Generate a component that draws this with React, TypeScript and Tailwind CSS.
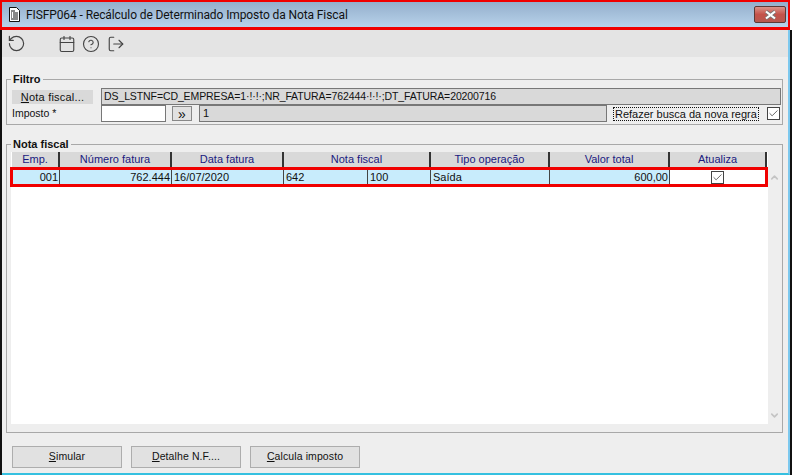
import { Calendar, Check, ChevronDown, ChevronUp, CircleHelp, LogOut, RotateCcw } from "lucide-react";

const columns = [
  { label: "Emp.", width: "w-[48px]" },
  { label: "Número fatura", width: "w-[112px]" },
  { label: "Data fatura", width: "w-[112px]" },
  { label: "Nota fiscal", width: "w-[147px]" },
  { label: "Tipo operação", width: "w-[119px]" },
  { label: "Valor total", width: "w-[120px]" },
  { label: "Atualiza", width: "w-[97px]" },
];

const CheckBox = () => (
  <span className="flex h-[13px] w-[13px] items-center justify-center border border-[#444] bg-white">
    <Check className="h-[11px] w-[11px] text-[#444]" strokeWidth={1.75} />
  </span>
);

const FormButton = ({ hot, rest }: { hot: string; rest: string }) => (
  <button className="flex h-[22px] w-[110px] items-center justify-center border border-[#adadad] bg-[#e1e1e1] text-[10.5px] tracking-[0.1px] text-[#111]">
    <span className="underline">{hot}</span>
    {rest}
  </button>
);

export default function App() {
  return (
    <div className="flex h-[475px] w-[792px] flex-col overflow-hidden bg-white font-['Liberation_Sans',Arial,sans-serif] text-[11px] text-[#111]">
      <header className="flex h-[30px] w-[790px] shrink-0 items-center border-x-2 border-t-2 border-b-[3px] border-[#f00000] bg-gradient-to-b from-[#94afcc] to-[#b8d2ea] pr-[2px] pl-[6px]">
        <svg className="h-[15px] w-[13px]" viewBox="0 0 13 15">
          <path d="M1.5 .5h7l3 3v11h-10z" fill="#fff" stroke="#111" />
          <path d="M3 4h4M3 6h1M5 6h5M3 8h1M5 8h5M3 10h1M5 10h5M3 12h7" stroke="#111" />
        </svg>
        <span className="ml-[5px] font-['Roboto',sans-serif] text-[12px] tracking-[-0.1px] text-[#111]">FISFP064 - Recálculo de Determinado Imposto da Nota Fiscal</span>
        <button className="ml-auto flex h-[17px] w-[32px] items-center justify-center rounded-[2px] border border-[#5c3a36] bg-gradient-to-b from-[#d9928a] via-[#c4524a] to-[#b8584e]">
          <svg className="h-[10px] w-[15px]" viewBox="0 0 15 10">
            <path d="M3 1.5l9 7M12 1.5l-9 7" stroke="#777" strokeWidth="3.6" />
            <path d="M3 1.5l9 7M12 1.5l-9 7" stroke="#fff" strokeWidth="2.2" />
          </svg>
        </button>
      </header>

      <div className="flex min-h-0 flex-1 flex-col border-x-2 border-x-[#111]">
        <div className="flex min-h-0 flex-1 flex-col border-r-2 border-b-2 border-r-[#7cc8ee] border-b-[#35c0e0] bg-[#eeeeee]">
          <div className="flex h-[27px] shrink-0 items-center bg-[#e4e4e4] pl-[5px] text-[#444]">
            <RotateCcw className="h-[19px] w-[19px]" strokeWidth={1.5} />
            <Calendar className="ml-[32px] h-[18px] w-[18px]" strokeWidth={1.5} />
            <CircleHelp className="ml-[6px] h-[18px] w-[18px]" strokeWidth={1.5} />
            <LogOut className="ml-[7px] h-[18px] w-[18px]" strokeWidth={1.5} />
          </div>

          <div className="flex flex-1 flex-col pr-[5px] pl-[4px]">
            <fieldset className="mt-[16px] h-[52px] border border-[#a8a8a8] pr-[1px] pl-[5px]">
              <legend className="-ml-[1px] px-[2px] text-[11px] leading-[13px] font-bold">Filtro</legend>
              <div className="mt-[2px] flex items-center">
                <button className="h-[14px] w-[81px] bg-[#d9d9d9] text-[11px] leading-[14px] tracking-[0.2px]">
                  <span className="underline">N</span>ota fiscal...
                </button>
                <div className="ml-[8px] flex h-[17px] flex-1 items-center border border-[#777] bg-[#d9d9d9] pl-[2px] text-[10.5px] tracking-[-0.1px]">
                  DS_LSTNF=CD_EMPRESA=1·!·!·;NR_FATURA=762444·!·!·;DT_FATURA=20200716
                </div>
              </div>
              <div className="flex h-[17px] items-center">
                <span className="w-[89px] text-[10.5px]">Imposto *</span>
                <div className="h-[17px] w-[65px] border border-[#777] bg-white" />
                <button className="ml-[6px] h-[15px] w-[20px] border border-[#888] bg-[#e1e1e1] text-[14px] leading-[12px]">»</button>
                <div className="ml-[7px] flex h-[17px] w-[408px] items-center border border-[#777] bg-[#d9d9d9] pl-[3px]">1</div>
                <span className="ml-[6px] border border-dotted border-[#111] px-[1px] text-[11px] leading-[12px] whitespace-nowrap">Refazer busca da nova regra</span>
                <span className="ml-auto mr-[1px]"><CheckBox /></span>
              </div>
            </fieldset>

            <fieldset className="mt-[13px] h-[295px] border border-[#a8a8a8] pl-[4px]">
              <legend className="px-[2px] text-[11px] leading-[13px] font-bold">Nota fiscal</legend>
              <div className="mt-[1px] flex h-[272px]">
                <div className="flex w-[757px] flex-col bg-white">
                  <div className="flex h-[15px] shrink-0 bg-white pl-[1px]">
                    {columns.map((col) => (
                      <div key={col.label} className={`${col.width} flex items-center justify-center border-r-2 border-[#333] bg-[#d9d9d9] text-[11px] text-[#1a1a80]`}>
                        {col.label}
                      </div>
                    ))}
                  </div>
                  <div className="-ml-[1px] flex h-[20px] w-[758px] shrink-0 border-[3px] border-[#f00000] bg-white text-[11px]">
                    <div className="flex w-[47px] items-center justify-end border-r border-[#444] bg-[#c8ecfc] pr-[1px]">001</div>
                    <div className="flex w-[112px] items-center justify-end border-r border-[#444] bg-[#c8ecfc] pr-[1px]">762.444</div>
                    <div className="flex w-[112px] items-center border-r border-[#444] bg-[#c8ecfc] pl-[2px]">16/07/2020</div>
                    <div className="flex w-[84px] items-center border-r border-[#444] bg-[#c8ecfc] pl-[2px]">642</div>
                    <div className="flex w-[63px] items-center border-r border-[#444] bg-[#c8ecfc] pl-[2px]">100</div>
                    <div className="flex w-[119px] items-center border-r border-[#444] bg-[#c8ecfc] pl-[2px]">Saída</div>
                    <div className="flex w-[120px] items-center justify-end border-r border-[#444] bg-[#c8ecfc] pr-[1px]">600,00</div>
                    <div className="flex w-[95px] items-center justify-center"><CheckBox /></div>
                  </div>
                </div>
                <div className="flex flex-1 flex-col items-start justify-between pt-[20px] pb-[3px] pl-[1px] text-[#c4c4c4]">
                  <ChevronUp className="h-[11px] w-[11px]" strokeWidth={3.5} />
                  <ChevronDown className="h-[11px] w-[11px]" strokeWidth={3.5} />
                </div>
              </div>
            </fieldset>

            <div className="mt-[13px] flex gap-[9px] pl-[6px]">
              <FormButton hot="S" rest="imular" />
              <FormButton hot="D" rest="etalhe N.F...." />
              <FormButton hot="C" rest="alcula imposto" />
            </div>
          </div>
        </div>
      </div>
    </div>
  );
}
